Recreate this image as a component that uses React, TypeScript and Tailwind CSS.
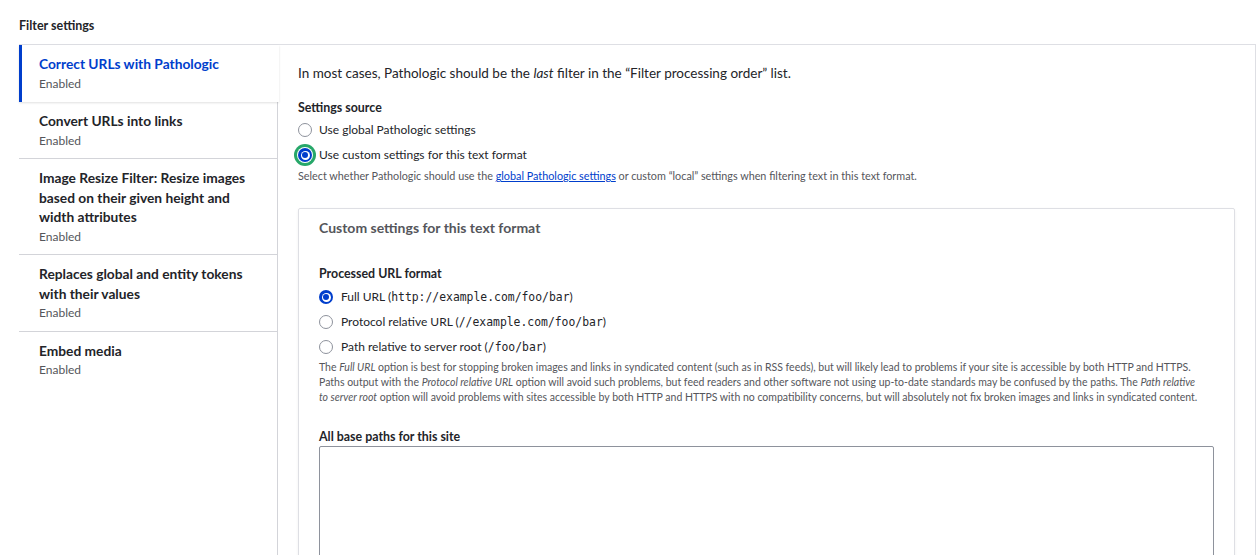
import React from "react";

const tabs = [
  { title: "Correct URLs with Pathologic", active: true },
  { title: "Convert URLs into links" },
  { title: "Image Resize Filter: Resize images based on their given height and width attributes" },
  { title: "Replaces global and entity tokens with their values" },
  { title: "Embed media" },
];

function Radio({ checked, focus }: { checked?: boolean; focus?: boolean }) {
  return (
    <span
      className={`relative inline-flex h-[14px] w-[14px] shrink-0 items-center justify-center rounded-full ${
        checked ? "bg-[#003ecc]" : "border border-[#8e929c] bg-white"
      } ${focus ? "ring-[3px] ring-[#26a769] ring-offset-[1px]" : ""}`}
    >
      {checked && (
        <span className="flex h-[9px] w-[9px] items-center justify-center rounded-full bg-white">
          <span className="h-[6px] w-[6px] rounded-full bg-[#003ecc]" />
        </span>
      )}
    </span>
  );
}

function Mono({ children }: { children: React.ReactNode }) {
  return <code className="font-['DejaVu_Sans_Mono',monospace] text-[11.4px]">{children}</code>;
}

export default function App() {
  return (
    <div className="min-h-[555px] bg-white font-['Lato','Noto_Sans',sans-serif] text-[#232429]">
      <div className="pl-[19px] pr-[2px] pt-[18px]">
        <h3 className="text-[12.5px] font-bold leading-[16px]">Filter settings</h3>

        <div className="mt-[10px] flex border-t border-[#dedfe4]">
          {/* tab list */}
          <ul className="w-[259px] shrink-0">
            {tabs.map((t) =>
              t.active ? (
                <li
                  key={t.title}
                  className="relative z-10 -mr-px border-l-[3px] border-[#003ecc] bg-white pb-[9.5px] pl-[17px] pr-3 pt-[9px] shadow-[0_1px_2px_rgba(0,0,0,0.12)]"
                >
                  <div className="text-[13.75px] font-bold leading-[19.5px] text-[#003ecc]">{t.title}</div>
                  <div className="text-[12px] leading-[19px] text-[#55565b]">Enabled</div>
                </li>
              ) : (
                <li
                  key={t.title}
                  className="border-b border-r border-[#d3d4d9] pb-[8.5px] pl-[20px] pr-3 pt-[9px] last:border-b-0 last:pb-[184px]"
                >
                  <div className="text-[13.75px] font-bold leading-[19.5px]">{t.title}</div>
                  <div className="text-[12px] leading-[19px] text-[#55565b]">Enabled</div>
                </li>
              )
            )}
          </ul>

          {/* pane */}
          <div className="flex-1 border-r border-[#dedfe4] pl-[20px] pr-[20px] pt-[18px]">
            <p className="text-[13.5px] leading-[20px]">
              In most cases, Pathologic should be the <em>last</em> filter in the “Filter processing order” list.
            </p>

            <div className="mt-[17px] text-[12.4px] font-bold leading-[16px]">Settings source</div>
            <div className="mt-[4px] flex items-center gap-[7px] text-[12px] leading-[20px]">
              <Radio />
              <span>Use global Pathologic settings</span>
            </div>
            <div className="mt-[5px] flex items-center gap-[7px] text-[12px] leading-[20px]">
              <Radio checked focus />
              <span>Use custom settings for this text format</span>
            </div>
            <p className="mt-[3px] text-[10.8px] leading-[16px] text-[#55565b]">
              Select whether Pathologic should use the{" "}
              <a className="text-[#003ecc] underline">global Pathologic settings</a> or custom “local” settings when
              filtering text in this text format.
            </p>

            <div className="mt-[24px] rounded-[2px] border border-[#dedfe4] px-[20px] pt-[9px] shadow-[0_1px_3px_rgba(0,0,0,0.06)]">
              <div className="text-[14px] font-bold leading-[20px] text-[#55565b]">
                Custom settings for this text format
              </div>

              <div className="mt-[28px] text-[12.4px] font-bold leading-[16px]">Processed URL format</div>
              <div className="mt-[5px] flex items-center gap-[8px] text-[12px] leading-[20px]">
                <Radio checked />
                <span>
                  Full URL (<Mono>http://example.com/foo/bar</Mono>)
                </span>
              </div>
              <div className="mt-[5px] flex items-center gap-[8px] text-[12px] leading-[20px]">
                <Radio />
                <span>
                  Protocol relative URL (<Mono>//example.com/foo/bar</Mono>)
                </span>
              </div>
              <div className="mt-[5px] flex items-center gap-[8px] text-[12px] leading-[20px]">
                <Radio />
                <span>
                  Path relative to server root (<Mono>/foo/bar</Mono>)
                </span>
              </div>
              <p className="mt-[3px] text-[10.5px] leading-[15px] text-[#55565b]">
                The <em>Full URL</em> option is best for stopping broken images and links in syndicated content (such as
                in RSS feeds), but will likely lead to problems if your site is accessible by both HTTP and HTTPS.
                <br />
                Paths output with the <em>Protocol relative URL</em> option will avoid such problems, but feed readers
                and other software not using up-to-date standards may be confused by the paths. The{" "}
                <em>Path relative</em>
                <br />
                <em>to server root</em> option will avoid problems with sites accessible by both HTTP and HTTPS with no
                compatibility concerns, but will absolutely not fix broken images and links in syndicated content.
              </p>

              <div className="mt-[24px] text-[12.4px] font-bold leading-[16px]">All base paths for this site</div>
              <textarea className="mt-[1px] block h-[140px] w-full resize-none rounded-[2px] border border-[#8e929c] bg-white" />
            </div>
          </div>
        </div>
      </div>
    </div>
  );
}
